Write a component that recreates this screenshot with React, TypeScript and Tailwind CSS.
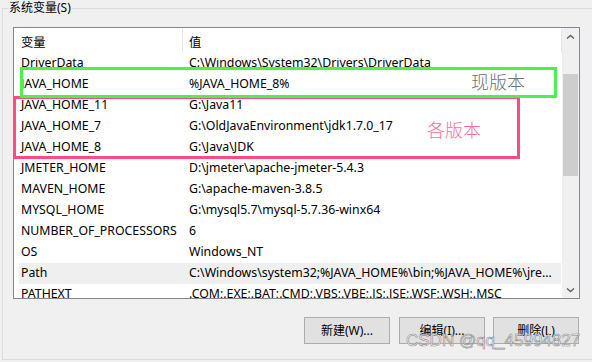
import React from "react";

type EnvVar = { name: string; value: string; selected?: boolean };

const vars: EnvVar[] = [
  { name: "DriverData", value: "C:\\Windows\\System32\\Drivers\\DriverData" },
  { name: "JAVA_HOME", value: "%JAVA_HOME_8%" },
  { name: "JAVA_HOME_11", value: "G:\\Java11" },
  { name: "JAVA_HOME_7", value: "G:\\OldJavaEnvironment\\jdk1.7.0_17" },
  { name: "JAVA_HOME_8", value: "G:\\Java\\JDK" },
  { name: "JMETER_HOME", value: "D:\\jmeter\\apache-jmeter-5.4.3" },
  { name: "MAVEN_HOME", value: "G:\\apache-maven-3.8.5" },
  { name: "MYSQL_HOME", value: "G:\\mysql5.7\\mysql-5.7.36-winx64" },
  { name: "NUMBER_OF_PROCESSORS", value: "6" },
  { name: "OS", value: "Windows_NT" },
  {
    name: "Path",
    value:
      "C:\\Windows\\system32;%JAVA_HOME%\\bin;%JAVA_HOME%\\jre\\bin;C:\\Windows;C:\\Windows\\System32\\Wbem",
    selected: true,
  },
  {
    name: "PATHEXT",
    value: ".COM;.EXE;.BAT;.CMD;.VBS;.VBE;.JS;.JSE;.WSF;.WSH;.MSC",
  },
];

function Chevron({ down }: { down?: boolean }) {
  return (
    <svg width="9" height="6" viewBox="0 0 9 6">
      <polyline
        points={down ? "1,1.5 4.5,4.5 8,1.5" : "1,4.5 4.5,1.5 8,4.5"}
        fill="none"
        stroke="#606060"
        strokeWidth="1.4"
      />
    </svg>
  );
}

export default function App() {
  return (
    <div className="relative w-[592px] h-[362px] overflow-hidden bg-[#f0f0f0] text-black text-[12.3px] font-['Noto_Sans','Noto_Sans_CJK_SC',sans-serif]">
      <fieldset className="ml-[2px] w-[620px] h-[360px] border border-[#dcdcdc]">
        <legend className="ml-[5px] px-[1px] leading-[16px] text-[12px]">
          系统变量(S)
        </legend>

        {/* list view */}
        <div className="ml-[10px] mt-[11px] w-[567px] h-[272px] border border-[#828790] bg-white flex">
          <div className="flex-1 flex flex-col overflow-hidden">
            <div className="h-[30px] shrink-0 flex">
              <div className="w-[168px] pl-[7px] flex items-center">变量</div>
              <div className="w-px h-[24px] mt-px bg-[#e5e5e5]" />
              <div className="flex-1 pl-[6px] flex items-center">值</div>
              <div className="w-px h-[24px] mt-px bg-[#e5e5e5]" />
            </div>
            <div className="flex-1 overflow-hidden">
              <div className="-mt-[5px]">
                {vars.map((v) => (
                  <div
                    key={v.name}
                    className={`ml-[5px] mr-px h-[21px] flex items-center ${
                      v.selected ? "bg-[#efefef]" : ""
                    }`}
                  >
                    <div className="w-[163px] pl-[2px] shrink-0 whitespace-nowrap">
                      {v.name}
                    </div>
                    <div className="flex-1 min-w-0 pl-[7px] pr-[8px] truncate">
                      {v.value}
                    </div>
                  </div>
                ))}
              </div>
            </div>
          </div>

          {/* scrollbar */}
          <div className="w-[17px] shrink-0 bg-[#f0f0f0] flex flex-col items-center">
            <div className="h-[17px] flex items-center justify-center">
              <Chevron />
            </div>
            <div className="mt-[29px] w-[15px] h-[102px] bg-[#cdcdcd]" />
            <div className="flex-1" />
            <div className="h-[17px] flex items-center justify-center">
              <Chevron down />
            </div>
          </div>
        </div>

        {/* buttons */}
        <div className="mt-[18px] ml-[301px] flex text-[12px]">
          <button className="w-[86px] h-[27px] bg-[#e1e1e1] border border-[#adadad]">
            新建(W)...
          </button>
          <button className="ml-[9px] w-[86px] h-[27px] bg-[#e1e1e1] border border-[#adadad]">
            编辑(I)...
          </button>
          <button className="ml-[8px] w-[86px] h-[27px] bg-[#e1e1e1] border border-[#adadad]">
            删除(L)
          </button>
        </div>
      </fieldset>

      {/* annotations */}
      <div className="absolute left-[13px] top-[96px] w-[507px] h-[63px] border-[3px] border-[#ff4a82]" />
      <div className="absolute left-[20px] top-[67px] w-[537px] h-[31px] border-[3px] border-[#4cf24c]" />
      <div className="absolute left-[471px] top-[70px] text-[18px] leading-[24px] font-light text-[#707070]">
        现版本
      </div>
      <div className="absolute left-[427px] top-[118px] text-[18px] leading-[24px] font-light text-[#ff6b9a]">
        各版本
      </div>

      {/* watermark */}
      <div className="absolute left-[406px] top-[330px] text-[17px] leading-[22px] font-['Liberation_Sans',sans-serif] text-white/70 [-webkit-text-stroke:0.6px_#8a8a8a]">
        CSDN @qq_45994827
      </div>
    </div>
  );
}
